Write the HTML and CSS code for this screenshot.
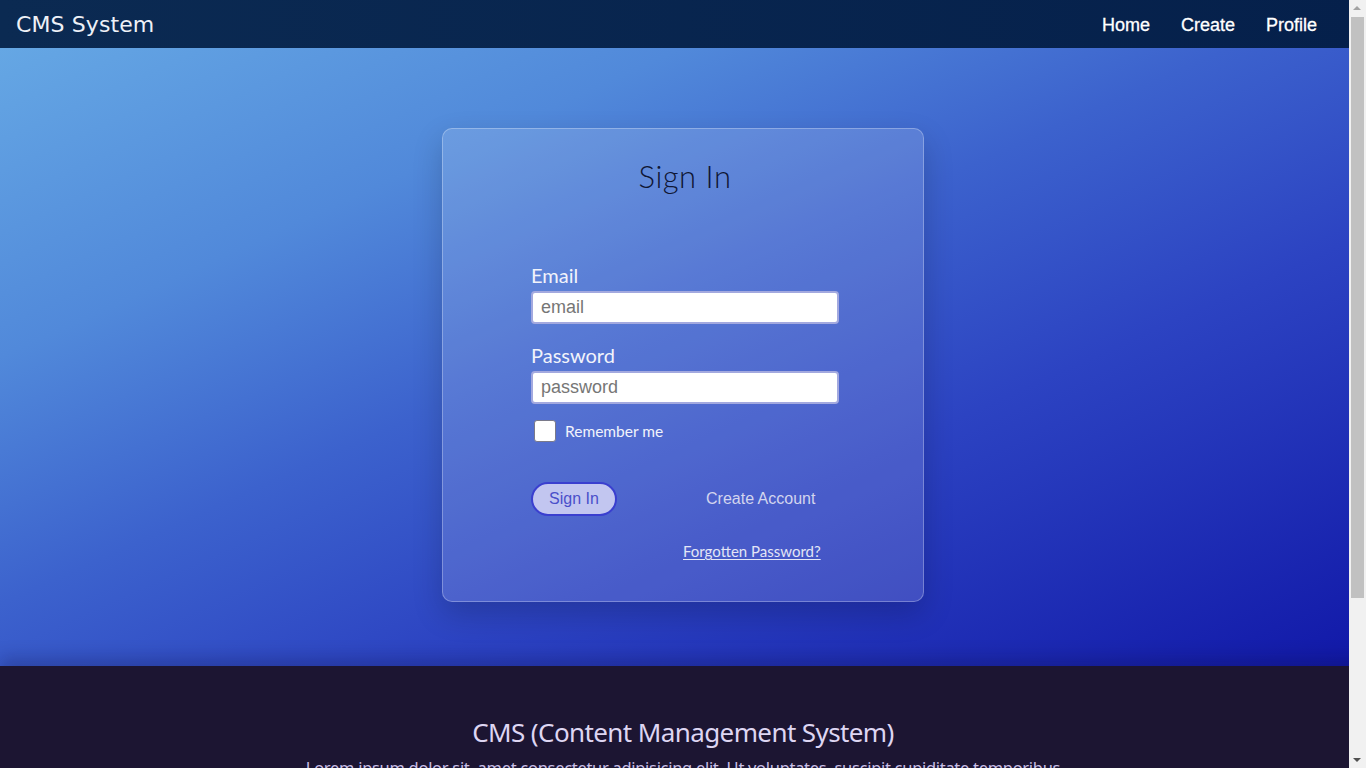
FILE: index.html
```html
<!DOCTYPE html>
<html lang="en">
<head>
<meta charset="utf-8">
<title>CMS System - Sign In</title>
<link rel="stylesheet" href="styles.css">
</head>
<body>
<header class="navbar">
  <a class="brand" href="#">CMS System</a>
  <nav class="nav-links">
    <a href="#">Home</a>
    <a href="#">Create</a>
    <a href="#">Profile</a>
  </nav>
</header>

<main class="hero">
  <section class="card">
    <h1 class="card-title">Sign In</h1>
    <form class="form">
      <div class="field">
        <label for="email">Email</label>
        <input id="email" type="email" placeholder="email">
      </div>
      <div class="field">
        <label for="password">Password</label>
        <input id="password" type="password" placeholder="password">
      </div>
      <label class="remember"><input type="checkbox" class="check"><span>Remember me</span></label>
      <div class="actions">
        <button type="button" class="btn">Sign In</button>
        <a href="#" class="create">Create Account</a>
      </div>
      <div class="forgot-row"><a href="#" class="forgot">Forgotten Password?</a></div>
    </form>
  </section>
</main>

<footer class="footer">
  <h2 class="footer-title">CMS (Content Management System)</h2>
  <p class="footer-text">Lorem ipsum dolor sit, amet consectetur adipisicing elit. Ut voluptates, suscipit cupiditate temporibus quae dolorem eveniet nobis, commodi illum facere officiis architecto. Quibusdam, numquam doloribus. Voluptas, aspernatur quia natus sapiente nesciunt ipsam.</p>
</footer>

<div class="scrollbar" aria-hidden="true">
  <span class="sb-arrow sb-up"></span>
  <span class="sb-thumb"></span>
  <span class="sb-arrow sb-down"></span>
</div>
</body>
</html>
```

FILE: styles.css
```css
* { box-sizing: border-box; }
html, body { margin: 0; padding: 0; }
body {
  overflow-x: hidden;
  font-family: "Liberation Sans", Arial, sans-serif;
  background: #1c1532;
}
a { text-decoration: none; color: inherit; }

.navbar {
  height: 48px;
  background: linear-gradient(90deg, #0b2a52, #05204b);
  display: flex;
  align-items: center;
  justify-content: space-between;
  padding: 0 49px 0 16px;
}
.brand {
  font-family: "DejaVu Sans", sans-serif;
  font-size: 22px;
  color: #eef1f7;
  letter-spacing: 0.1px;
}
.nav-links { display: flex; gap: 31px; }
.nav-links a {
  color: #ffffff;
  font-size: 18px;
  font-family: "Liberation Sans", Arial, sans-serif;
  margin-top: 3px;
  -webkit-text-stroke: 0.3px #fff;
}

.hero {
  width: 100vw;
  height: 618px;
  padding-top: 80px;
  background: linear-gradient(to bottom right, #65a7e4 0%, #5189da 25%, #3c62cd 45%, #2c43c2 65%, #1118a8 100%);
  display: flex;
  justify-content: center;
  align-items: flex-start;
}
.card {
  width: 482px;
  height: 474px;
  border-radius: 10px;
  background: rgba(255, 255, 255, 0.14);
  border: 1px solid rgba(255, 255, 255, 0.28);
  box-shadow: 0 12px 30px rgba(0, 0, 0, 0.18);
  padding: 29px 0 0 4px;
}
.card-title {
  margin: 0;
  text-align: center;
  font-family: Lato, sans-serif;
  font-weight: 300;
  font-size: 31px;
  line-height: 36px;
  color: #0f1634;
  letter-spacing: 0.5px;
}
.form {
  width: 308px;
  margin: 69px auto 0;
  display: flex;
  flex-direction: column;
}
.field { display: flex; flex-direction: column; margin-bottom: 19px; }
.field label {
  font-family: Lato, sans-serif;
  font-size: 20px;
  line-height: 24px;
  color: #f1f3fb;
  margin-bottom: 4px;
}
.field input {
  height: 33px;
  border: 2px solid #a3a9df;
  border-radius: 4px;
  background: #ffffff;
  padding: 0 8px;
  font-family: "Liberation Sans", Arial, sans-serif;
  font-size: 18px;
  color: #333;
  outline: none;
}
.field input::placeholder { color: #767676; }

.remember {
  display: flex;
  align-items: center;
  margin-top: -3px;
  padding-left: 3px;
  height: 22px;
}
.check {
  appearance: none;
  -webkit-appearance: none;
  width: 22px;
  height: 22px;
  margin: 0 9px 0 0;
  background: #fff;
  border: 1px solid #7a7a8a;
  border-radius: 3px;
}
.remember span {
  font-family: Lato, sans-serif;
  font-size: 15.5px;
  color: #f1f3fb;
}

.actions {
  display: flex;
  align-items: center;
  margin-top: 40px;
  gap: 89px;
}
.btn {
  width: 86px;
  height: 34px;
  border-radius: 17px;
  border: 2px solid #3a3fcf;
  background: #c2c6f0;
  color: #4a4fca;
  font-family: "Liberation Sans", Arial, sans-serif;
  font-size: 16px;
  padding: 0;
}
.create {
  font-family: "Liberation Sans", Arial, sans-serif;
  font-size: 16px;
  color: #d3d5ee;
}
.forgot-row {
  display: flex;
  padding-left: 152px;
  margin-top: 26px;
}
.forgot {
  font-family: Lato, sans-serif;
  font-size: 15px;
  color: #e3e5f6;
  text-decoration: underline;
  text-underline-offset: 2px;
}

.footer {
  width: 100vw;
  background: #1c1532;
  padding: 48px 0 100px;
  text-align: center;
  box-shadow: 0 -8px 16px rgba(10, 10, 60, 0.25);
  position: relative;
}
.footer-title {
  margin: 0;
  font-family: "Noto Sans", sans-serif;
  font-weight: 400;
  font-size: 26px;
  line-height: 36px;
  letter-spacing: -0.6px;
  color: #ded6f2;
}
.footer-text {
  max-width: 790px;
  margin: 5px auto 0;
  font-family: "Noto Sans", sans-serif;
  font-size: 16.5px;
  letter-spacing: -0.3px;
  line-height: 26px;
  color: #c9bfe6;
}

.scrollbar {
  position: fixed;
  top: 0;
  right: 0;
  width: 17px;
  height: 100vh;
  background: #f1f1f1;
  z-index: 10;
}
.sb-thumb {
  position: absolute;
  left: 2px;
  top: 17px;
  width: 13px;
  height: 581px;
  background: #c1c1c1;
}
.sb-arrow {
  position: absolute;
  left: 4px;
  width: 0;
  height: 0;
  border-left: 4.5px solid transparent;
  border-right: 4.5px solid transparent;
}
.sb-up { top: 6px; border-bottom: 4px solid #a3a3a3; }
.sb-down { bottom: 6px; border-top: 4px solid #505050; }
```
